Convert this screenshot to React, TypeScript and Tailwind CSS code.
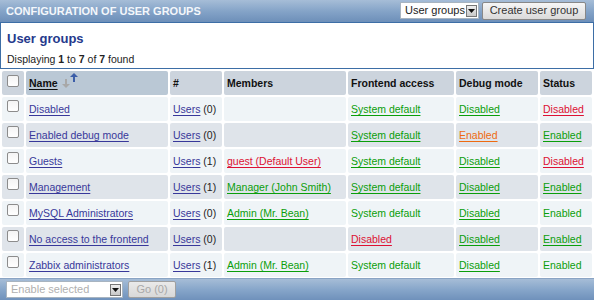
import React from "react";

type Cell = { t: string; c: "g" | "r" | "o" | "b"; u: boolean } | null;

const colorCls: Record<string, string> = {
  g: "text-[#0a9e0a] decoration-[#0a9e0a]",
  r: "text-[#dd1133] decoration-[#dd1133]",
  o: "text-[#ee6a10] decoration-[#ee6a10]",
  b: "text-[#38389a] decoration-[#38389a]",
};

const rows: {
  name: string;
  users: number;
  members: Cell;
  fe: Cell;
  dbg: Cell;
  st: Cell;
}[] = [
  { name: "Disabled", users: 0, members: null, fe: { t: "System default", c: "g", u: true }, dbg: { t: "Disabled", c: "g", u: true }, st: { t: "Disabled", c: "r", u: true } },
  { name: "Enabled debug mode", users: 0, members: null, fe: { t: "System default", c: "g", u: true }, dbg: { t: "Enabled", c: "o", u: true }, st: { t: "Enabled", c: "g", u: true } },
  { name: "Guests", users: 1, members: { t: "guest (Default User)", c: "r", u: true }, fe: { t: "System default", c: "g", u: true }, dbg: { t: "Disabled", c: "g", u: true }, st: { t: "Disabled", c: "r", u: true } },
  { name: "Management", users: 1, members: { t: "Manager (John Smith)", c: "g", u: true }, fe: { t: "System default", c: "g", u: true }, dbg: { t: "Disabled", c: "g", u: true }, st: { t: "Enabled", c: "g", u: true } },
  { name: "MySQL Administrators", users: 0, members: { t: "Admin (Mr. Bean)", c: "g", u: true }, fe: { t: "System default", c: "g", u: false }, dbg: { t: "Disabled", c: "g", u: true }, st: { t: "Enabled", c: "g", u: false } },
  { name: "No access to the frontend", users: 0, members: null, fe: { t: "Disabled", c: "r", u: true }, dbg: { t: "Disabled", c: "g", u: true }, st: { t: "Enabled", c: "g", u: true } },
  { name: "Zabbix administrators", users: 1, members: { t: "Admin (Mr. Bean)", c: "g", u: true }, fe: { t: "System default", c: "g", u: false }, dbg: { t: "Disabled", c: "g", u: true }, st: { t: "Enabled", c: "g", u: false } },
];

function Txt({ cell }: { cell: Cell }) {
  if (!cell) return null;
  return (
    <span className={`${colorCls[cell.c]} ${cell.u ? "underline underline-offset-[2px]" : ""}`}>
      {cell.t}
    </span>
  );
}

function Checkbox() {
  return (
    <div className="w-[12px] h-[12px] rounded-[2px] border border-[#8c8c8c] bg-gradient-to-b from-[#f4f4f4] to-white" />
  );
}

function DropArrow() {
  return (
    <div className="w-[11px] h-[12px] border border-[#777] bg-gradient-to-b from-[#eee] to-[#c8c8c8] flex items-center justify-center">
      <svg width="7" height="4" viewBox="0 0 7 4">
        <polygon points="0,0 7,0 3.5,4" fill="#111" />
      </svg>
    </div>
  );
}

function SortArrows() {
  return (
    <svg width="20" height="16" viewBox="0 0 20 16" className="ml-[3px] -mt-[4px]">
      <rect x="4" y="6" width="2" height="5" fill="#a8a8a8" />
      <polygon points="1,11 9,11 5,15" fill="#a8a8a8" />
      <polygon points="9,4 17,4 13,0" fill="#3c5ea8" />
      <rect x="12" y="4" width="2" height="5" fill="#3c5ea8" />
    </svg>
  );
}

const grid = "grid grid-cols-[22px_142px_52px_122px_106px_82px_52px] gap-x-[2px]";

export default function App() {
  return (
    <div className="w-[594px] h-[300px] overflow-hidden bg-white flex flex-col font-['Liberation_Sans',Arial,sans-serif] text-[10.5px] text-[#222] leading-none">
      {/* header bar */}
      <div className="h-[22px] shrink-0 flex items-center justify-between pl-[6px] pr-[8px] bg-gradient-to-b from-[#a6bdd7] via-[#85a4c8] to-[#6d8fb9]">
        <span className="text-[11px] font-bold text-[#f4f7fb] tracking-[0px]">CONFIGURATION OF USER GROUPS</span>
        <div className="flex items-center gap-[3px] -mt-[1px]">
          <div className="w-[79px] h-[17px] bg-white border border-[#a8b4c0] flex items-center justify-between pl-[4px] pr-[1px]">
            <span className="text-[11px] text-[#222]">User groups</span>
            <DropArrow />
          </div>
          <div className="w-[104px] h-[18px] rounded-[2px] border border-[#888] bg-gradient-to-b from-[#f6f6f6] to-[#dadada] flex items-center justify-center text-[11px] text-[#333]">
            Create user group
          </div>
        </div>
      </div>

      {/* title box */}
      <div className="h-[47px] shrink-0 border border-[#3d6ea6] px-[6px] pt-[8px] flex flex-col">
        <div className="text-[13px] font-bold text-[#25398c] leading-[15px]">User groups</div>
        <div className="mt-[7px] text-[10.5px] leading-[12px]">
          Displaying <b>1</b> to <b>7</b> of <b>7</b> found
        </div>
      </div>

      {/* table */}
      <div className="mt-[2px] pl-[2px] flex flex-col gap-y-[2px]">
        <div className={`${grid} h-[24px] font-bold text-[#111]`}>
          <div className="bg-[#ccd4dd] rounded-[2px] pl-[5px] pt-[4px]">
            <Checkbox />
          </div>
          <div className="bg-[#bac8d5] rounded-[2px] px-[3px] flex items-center">
            <span className="underline underline-offset-[2px]">Name</span>
            <SortArrows />
          </div>
          <div className="bg-[#ccd4dd] rounded-[2px] px-[3px] flex items-center">#</div>
          <div className="bg-[#ccd4dd] rounded-[2px] px-[3px] flex items-center">Members</div>
          <div className="bg-[#ccd4dd] rounded-[2px] px-[3px] flex items-center">Frontend access</div>
          <div className="bg-[#ccd4dd] rounded-[2px] px-[3px] flex items-center">Debug mode</div>
          <div className="bg-[#ccd4dd] rounded-[2px] px-[3px] flex items-center">Status</div>
        </div>
        {rows.map((r, i) => {
          const bg = i % 2 === 0 ? "bg-[#eff4f7]" : "bg-[#dfe4ea]";
          const cell = `${bg} rounded-[2px] px-[3px] flex items-center`;
          return (
            <div key={i} className={`${grid} h-[24px]`}>
              <div className={`${bg} rounded-[2px] pl-[5px] pt-[3px]`}>
                <Checkbox />
              </div>
              <div className={cell}>
                <span className="text-[#38389a] underline underline-offset-[2px] whitespace-nowrap">{r.name}</span>
              </div>
              <div className={cell}>
                <span className="whitespace-nowrap">
                  <span className="text-[#38389a] underline underline-offset-[2px]">Users</span> ({r.users})
                </span>
              </div>
              <div className={cell}>
                <span className="whitespace-nowrap"><Txt cell={r.members} /></span>
              </div>
              <div className={cell}>
                <Txt cell={r.fe} />
              </div>
              <div className={cell}>
                <Txt cell={r.dbg} />
              </div>
              <div className={cell}>
                <Txt cell={r.st} />
              </div>
            </div>
          );
        })}
      </div>

      {/* footer */}
      <div className="mt-[1px] h-[22px] shrink-0 flex items-center gap-[5px] pl-[6px] bg-gradient-to-b from-[#a6bdd7] via-[#87a6ca] to-[#6f91bb] border-t border-[#8aa4c4]">
        <div className="w-[117px] h-[17px] bg-white border border-[#a8b4c0] flex items-center justify-between pl-[4px] pr-[1px]">
          <span className="text-[11px] text-[#b0b0b0]">Enable selected</span>
          <DropArrow />
        </div>
        <div className="w-[48px] h-[17px] rounded-[2px] border border-[#a0a0a0] bg-gradient-to-b from-[#eaeaea] to-[#d8d8d8] flex items-center justify-center text-[11px] text-[#a8a8a8]">
          Go (0)
        </div>
      </div>
    </div>
  );
}
